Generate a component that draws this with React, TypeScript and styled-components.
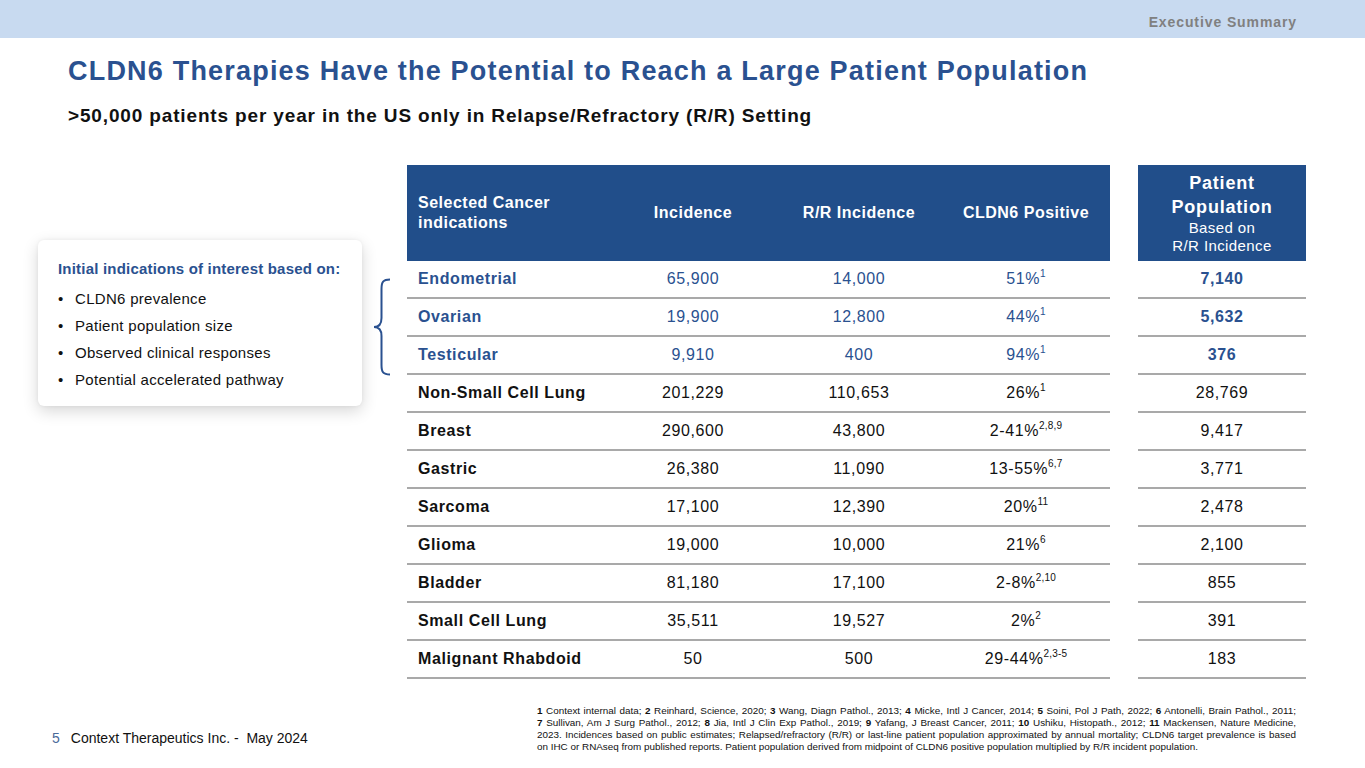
import React from "react";
import styled, { createGlobalStyle } from "styled-components";

const GlobalStyle = createGlobalStyle`
    html, body {
        margin: 0;
        padding: 0;
        background: #ffffff;
    }
    body {
        font-family: "Liberation Sans", Arial, sans-serif;
    }
`

const BLUE = "#2a5190";
const HEAD_BG = "#214e8a";

type Row = {
    name: string
    incidence: string
    rr: string
    pos: string
    sup: string
    patients: string
    focus?: boolean
}

const rows: Row[] = [
    { name: "Endometrial", incidence: "65,900", rr: "14,000", pos: "51%", sup: "1", patients: "7,140", focus: true },
    { name: "Ovarian", incidence: "19,900", rr: "12,800", pos: "44%", sup: "1", patients: "5,632", focus: true },
    { name: "Testicular", incidence: "9,910", rr: "400", pos: "94%", sup: "1", patients: "376", focus: true },
    { name: "Non-Small Cell Lung", incidence: "201,229", rr: "110,653", pos: "26%", sup: "1", patients: "28,769" },
    { name: "Breast", incidence: "290,600", rr: "43,800", pos: "2-41%", sup: "2,8,9", patients: "9,417" },
    { name: "Gastric", incidence: "26,380", rr: "11,090", pos: "13-55%", sup: "6,7", patients: "3,771" },
    { name: "Sarcoma", incidence: "17,100", rr: "12,390", pos: "20%", sup: "11", patients: "2,478" },
    { name: "Glioma", incidence: "19,000", rr: "10,000", pos: "21%", sup: "6", patients: "2,100" },
    { name: "Bladder", incidence: "81,180", rr: "17,100", pos: "2-8%", sup: "2,10", patients: "855" },
    { name: "Small Cell Lung", incidence: "35,511", rr: "19,527", pos: "2%", sup: "2", patients: "391" },
    { name: "Malignant Rhabdoid", incidence: "50", rr: "500", pos: "29-44%", sup: "2,3-5", patients: "183" },
];

const bullets = [
    "CLDN6 prevalence",
    "Patient population size",
    "Observed clinical responses",
    "Potential accelerated pathway",
];

export default function App() {
    return (
        <Page>
            <GlobalStyle />
            <TopBar>
                <Section>Executive Summary</Section>
            </TopBar>
            <Heading>
                <Title>CLDN6 Therapies Have the Potential to Reach a Large Patient Population</Title>
                <Subtitle>&gt;50,000 patients per year in the US only in Relapse/Refractory (R/R) Setting</Subtitle>
            </Heading>

            <Body>
                <Callout>
                    <CalloutTitle>Initial indications of interest based on:</CalloutTitle>
                    <BulletList>
                        {bullets.map(b => <li key={b}>{b}</li>)}
                    </BulletList>
                </Callout>
                <Brace width="20" height="98" viewBox="0 0 20 98">
                    <path
                        d="M18 1.5 C11 1.5 9.5 4 9.5 11 L9.5 40 C9.5 46 7.5 49 2 49 C7.5 49 9.5 52 9.5 58 L9.5 87 C9.5 94 11 96.5 18 96.5"
                        fill="none"
                        stroke={BLUE}
                        strokeWidth="2"
                    />
                </Brace>

                <MainTable>
                    <HeadCell $align="left">Selected Cancer<br />indications</HeadCell>
                    <HeadCell>Incidence</HeadCell>
                    <HeadCell>R/R Incidence</HeadCell>
                    <HeadCell>CLDN6 Positive</HeadCell>
                    {rows.map(r => (
                        <React.Fragment key={r.name}>
                            <Cell $align="left" $bold $focus={r.focus}>{r.name}</Cell>
                            <Cell $focus={r.focus}>{r.incidence}</Cell>
                            <Cell $focus={r.focus}>{r.rr}</Cell>
                            <Cell $focus={r.focus}>{r.pos}<Sup>{r.sup}</Sup></Cell>
                        </React.Fragment>
                    ))}
                </MainTable>

                <SideTable>
                    <SideHead>
                        <strong>Patient<br />Population</strong>
                        <span>Based on<br />R/R Incidence</span>
                    </SideHead>
                    {rows.map(r => (
                        <Cell key={r.name} $bold={r.focus} $focus={r.focus}>{r.patients}</Cell>
                    ))}
                </SideTable>
            </Body>

            <Footer>
                <PageInfo>
                    <PageNum>5</PageNum>
                    <span>Context Therapeutics Inc. -&nbsp; May 2024</span>
                </PageInfo>
                <Notes>
                    <NoteLine>
                        <b>1</b> Context internal data; <b>2</b> Reinhard, Science, 2020; <b>3</b> Wang, Diagn Pathol., 2013; <b>4</b> Micke, Intl J Cancer, 2014; <b>5</b> Soini, Pol J Path, 2022; <b>6</b> Antonelli, Brain Pathol., 2011;
                    </NoteLine>
                    <NoteLine>
                        <b>7</b> Sullivan, Am J Surg Pathol., 2012; <b>8</b> Jia, Intl J Clin Exp Pathol., 2019; <b>9</b> Yafang, J Breast Cancer, 2011; <b>10</b> Ushiku, Histopath., 2012; <b>11</b> Mackensen, Nature Medicine,
                    </NoteLine>
                    <NoteLine>
                        2023. Incidences based on public estimates; Relapsed/refractory (R/R) or last-line patient population approximated by annual mortality; CLDN6 target prevalence is based
                    </NoteLine>
                    <NoteLine $last>
                        on IHC or RNAseq from published reports. Patient population derived from midpoint of CLDN6 positive population multiplied by R/R incident population.
                    </NoteLine>
                </Notes>
            </Footer>
        </Page>
    );
}

const Page = styled.div`
    width: 1365px;
    height: 768px;
    display: flex;
    flex-direction: column;
    overflow: hidden;
    color: #111111;
`

const TopBar = styled.header`
    height: 38px;
    background: #c8daf0;
    display: flex;
    justify-content: flex-end;
    align-items: center;
    padding: 0 68px 0 0;
`

const Section = styled.span`
    font-size: 14px;
    font-weight: 700;
    letter-spacing: 0.9px;
    color: #808080;
    margin-top: 5px;
`

const Heading = styled.div`
    padding-left: 68px;
`

const Title = styled.h1`
    margin: 16px 0 0;
    font-size: 27px;
    line-height: 34px;
    font-weight: 700;
    letter-spacing: 1.2px;
    color: ${BLUE};
`

const Subtitle = styled.h2`
    margin: 16px 0 0;
    font-size: 19px;
    line-height: 24px;
    font-weight: 700;
    letter-spacing: 0.85px;
    color: #111111;
`

const Body = styled.main`
    display: flex;
    align-items: flex-start;
    padding-left: 38px;
    margin-top: 37px;
`

const Callout = styled.div`
    width: 324px;
    height: 166px;
    box-sizing: border-box;
    margin-top: 75px;
    padding: 18px 20px 0;
    background: #ffffff;
    border-radius: 6px;
    box-shadow: 0 5px 16px rgba(0, 0, 0, 0.16), 0 0 4px rgba(0, 0, 0, 0.05);
`

const CalloutTitle = styled.div`
    font-size: 15px;
    line-height: 22px;
    font-weight: 700;
    letter-spacing: 0.2px;
    color: ${BLUE};
`

const BulletList = styled.ul`
    list-style: none;
    margin: 5px 0 0;
    padding: 0;
    li {
        position: relative;
        padding-left: 17px;
        font-size: 15px;
        line-height: 27px;
        letter-spacing: 0.3px;
        color: #111111;
    }
    li::before {
        content: "•";
        position: absolute;
        left: 0;
        top: 0;
    }
`

const Brace = styled.svg`
    margin: 113px 0 0 10px;
    flex-shrink: 0;
`

const MainTable = styled.div`
    display: grid;
    grid-template-columns: 203px 166px 166px 168px;
    margin-left: 15px;
`

const SideTable = styled.div`
    display: grid;
    grid-template-columns: 168px;
    margin-left: 28px;
`

type AlignProps = { $align?: "left" | "center" }

const HeadCell = styled.div<AlignProps>`
    height: 96px;
    display: flex;
    align-items: center;
    justify-content: ${p => p.$align === "left" ? "flex-start" : "center"};
    text-align: ${p => p.$align === "left" ? "left" : "center"};
    padding-left: ${p => p.$align === "left" ? "11px" : "0"};
    background: ${HEAD_BG};
    color: #ffffff;
    font-size: 16px;
    line-height: 20px;
    font-weight: 700;
    letter-spacing: 0.5px;
`

const SideHead = styled.div`
    height: 96px;
    display: flex;
    flex-direction: column;
    align-items: center;
    justify-content: center;
    text-align: center;
    background: ${HEAD_BG};
    color: #ffffff;
    strong {
        font-size: 18px;
        line-height: 24px;
        letter-spacing: 0.8px;
    }
    span {
        font-size: 15px;
        line-height: 18px;
        letter-spacing: 0.4px;
    }
`

type CellProps = AlignProps & { $bold?: boolean, $focus?: boolean }

const Cell = styled.div<CellProps>`
    height: 38px;
    box-sizing: border-box;
    display: flex;
    align-items: center;
    justify-content: ${p => p.$align === "left" ? "flex-start" : "center"};
    padding-left: ${p => p.$align === "left" ? "11px" : "0"};
    border-bottom: 2px solid #a9a9a9;
    font-size: 16px;
    letter-spacing: 0.6px;
    font-weight: ${p => p.$bold ? 700 : 400};
    color: ${p => p.$focus ? BLUE : "#111111"};
`

const Sup = styled.sup`
    font-size: 10px;
    letter-spacing: 0.2px;
    align-self: flex-start;
    margin-top: 8px;
    line-height: 1;
`

const Footer = styled.footer`
    margin-top: auto;
    display: flex;
    justify-content: space-between;
    align-items: flex-end;
    padding: 0 69px 15px 52px;
`

const PageInfo = styled.div`
    display: flex;
    gap: 11px;
    font-size: 14px;
    line-height: 16px;
    margin-bottom: 7px;
`

const PageNum = styled.span`
    color: #4a6a99;
`

const Notes = styled.div`
    width: 759px;
    font-size: 9.9px;
    line-height: 12px;
    color: #111111;
`

const NoteLine = styled.div<{ $last?: boolean }>`
    text-align: justify;
    text-align-last: ${p => p.$last ? "left" : "justify"};
`
